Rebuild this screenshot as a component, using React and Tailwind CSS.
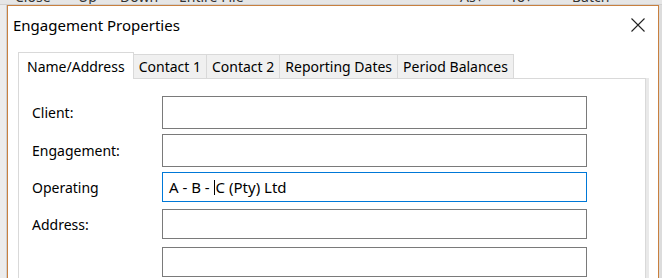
const tabs = ['Name/Address', 'Contact 1', 'Contact 2', 'Reporting Dates', 'Period Balances'];

const Field = ({ label, height, top, focused, value }) => (
  <div className={`flex shrink-0 items-center ${top}`}>
    <div className="w-[130px] text-[14px] text-black">{label}</div>
    <div
      className={`flex w-[425px] items-center bg-white pl-[6px] text-[15px] text-black border ${height} ${
        focused ? 'border-[#0078d7]' : 'border-[#7a7a7a]'
      }`}
    >
      {value}
    </div>
  </div>
);

const App = () => {
  return (
    <div className="h-[278px] w-[662px] overflow-hidden bg-[#e6e6e6] font-['Noto_Sans',sans-serif]">
      {/* window behind the dialog */}
      <div className="relative h-[5px] overflow-hidden border-b border-[#d0d0d0] text-[14px] leading-none text-[#333]">
        <span className="absolute left-[15px] top-[-10px]">Close</span>
        <span className="absolute left-[78px] top-[-10px]">Up</span>
        <span className="absolute left-[120px] top-[-10px]">Down</span>
        <span className="absolute left-[169px] top-[-6px] h-[6px] border-l border-[#bbb]" />
        <span className="absolute left-[179px] top-[-10px]">Entire File</span>
        <span className="absolute left-[439px] top-[-6px] h-[6px] border-l border-[#bbb]" />
        <span className="absolute left-[460px] top-[-10px]">As▾</span>
        <span className="absolute left-[510px] top-[-10px]">To▾</span>
        <span className="absolute left-[557px] top-[-6px] h-[6px] border-l border-[#bbb]" />
        <span className="absolute left-[572px] top-[-10px]">Batch</span>
        <span className="absolute left-[622px] top-[-6px] h-[6px] border-l border-[#bbb]" />
      </div>

      <div className="flex h-[273px]">
        <div className="w-[7px] shrink-0 border-r border-[#cfcfcf] bg-[#ececec]" />
        <div className="flex w-[652px] shrink-0 flex-col overflow-hidden border-l border-t border-r border-[#c8803f] bg-white">
          <div className="flex h-[38px] shrink-0 items-center justify-between pl-[5px] pr-[13px]">
            <span className="text-[15px] text-black">Engagement Properties</span>
            <svg width="14" height="14" viewBox="0 0 14 14">
              <path d="M0.5 0.5 L13.5 13.5 M13.5 0.5 L0.5 13.5" stroke="#222" strokeWidth="1.1" />
            </svg>
          </div>

          <div className="mt-[8px] flex shrink-0 flex-col pl-[10px] pr-[12px]">
            <div className="flex shrink-0 items-end">
              {tabs.map((t, i) =>
                i === 0 ? (
                  <div
                    key={t}
                    className="relative z-10 -mb-px flex h-[27px] items-center border border-b-0 border-[#d9d9d9] bg-white px-[8px] text-[14px] text-black"
                  >
                    {t}
                  </div>
                ) : (
                  <div
                    key={t}
                    className="flex h-[24px] items-center border border-l-0 border-b-0 border-[#d9d9d9] bg-[#f0f0f0] px-[5px] text-[14px] text-black"
                  >
                    {t}
                  </div>
                )
              )}
            </div>
            <div className="flex h-[210px] w-[628px] shrink-0 flex-col border border-[#d9d9d9] bg-white pl-[13px] pt-[17px] shadow-[3px_0_0_0_#e9e9e9]">
              <Field label="Client:" height="h-[33px]" top="" />
              <Field label="Engagement:" height="h-[33px]" top="mt-[5px]" />
              <Field
                label="Operating"
                height="h-[30px]"
                top="mt-[5px]"
                focused
                value={
                  <span className="flex items-center">
                    A - B -&nbsp;<span className="mr-[1px] inline-block h-[15px] w-px bg-black" />C (Pty) Ltd
                  </span>
                }
              />
              <Field label="Address:" height="h-[30px]" top="mt-[7px]" />
              <Field label="" height="h-[30px]" top="mt-[8px]" />
            </div>
          </div>
        </div>
        <div className="flex-1 bg-[#dcdcdc]" />
      </div>
    </div>
  );
};

export default App;
